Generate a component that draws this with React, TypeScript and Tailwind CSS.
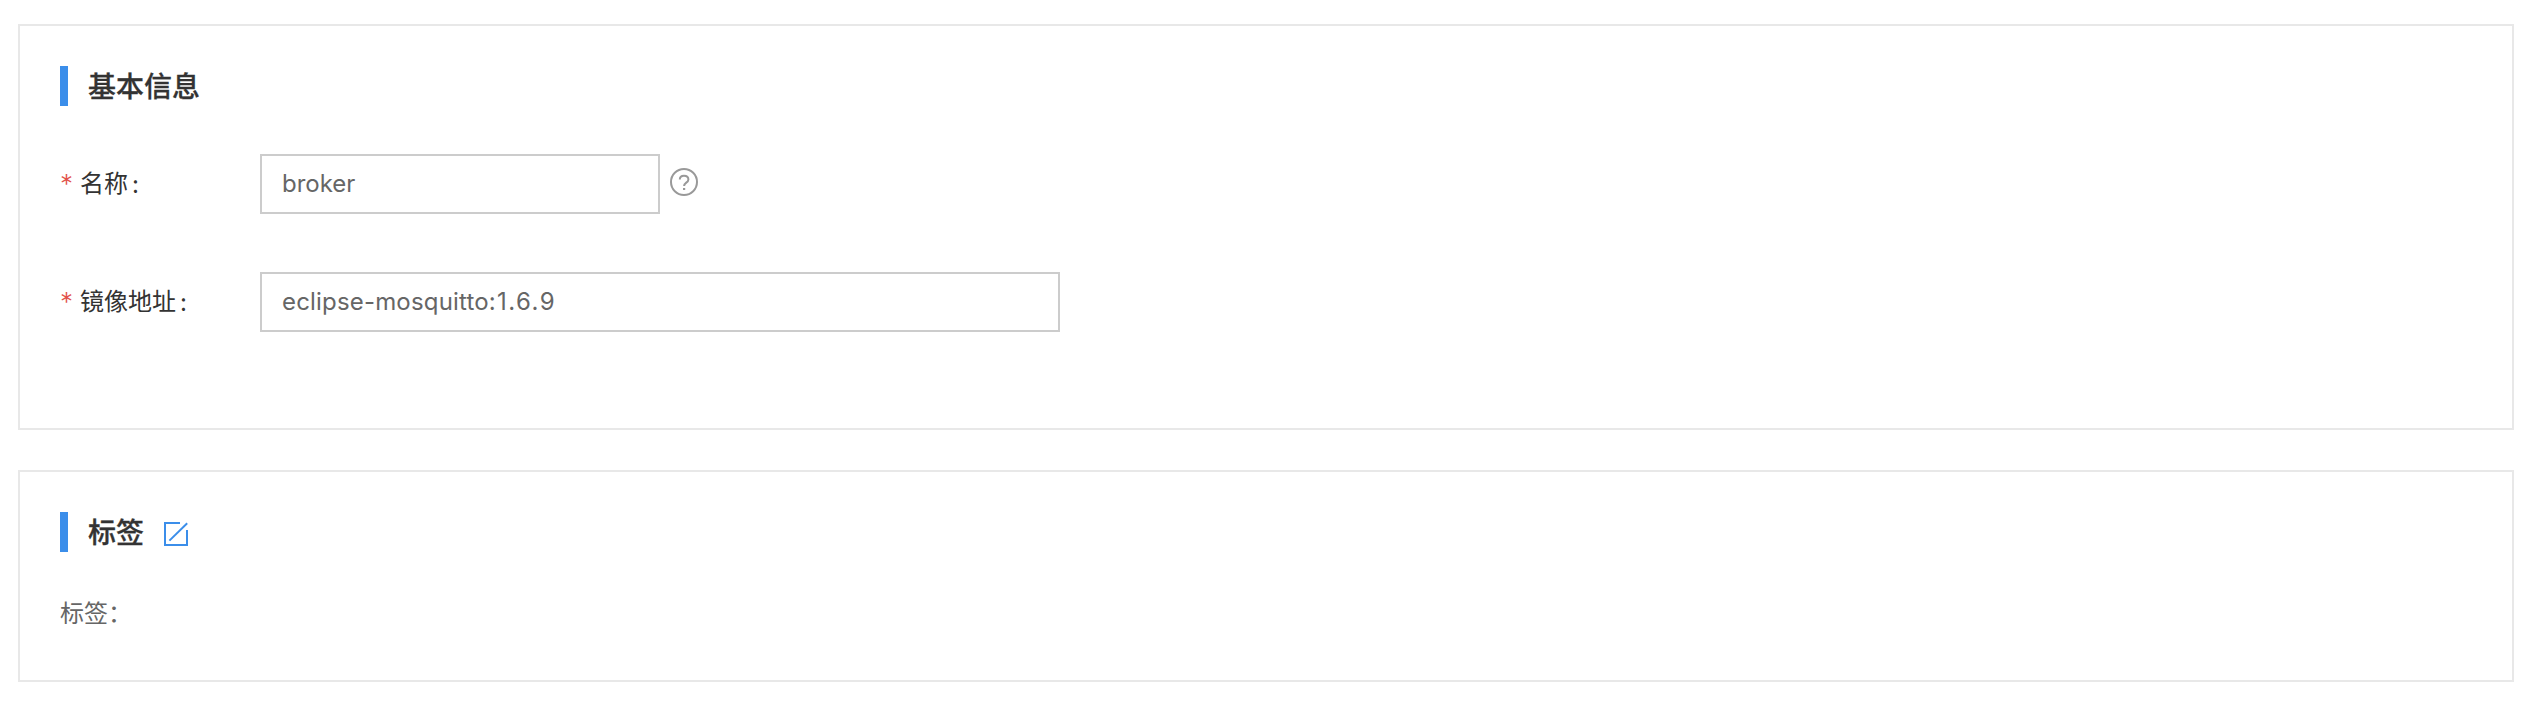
import type { ReactNode } from "react";

function Panel({ className, children }: { className: string; children: ReactNode }) {
  return (
    <section className={`w-[2496px] border-2 border-[#e8e8e8] bg-white pl-10 pt-10 ${className}`}>
      {children}
    </section>
  );
}

function PanelTitle({ text, children }: { text: string; children?: ReactNode }) {
  return (
    <div className="flex h-10 items-center">
      <span className="h-10 w-2 bg-[#3b8eea]" />
      <h2 className="ml-5 pt-0.5 text-[28px] leading-10 font-medium text-[#333] [-webkit-text-stroke:0.3px_#333]">{text}</h2>
      {children}
    </div>
  );
}

function Field({ label, width, value, children }: { label: string; width: string; value: ReactNode; children?: ReactNode }) {
  return (
    <div className="flex h-[60px] items-center">
      <div className="flex w-[200px] items-center text-2xl leading-9 text-[#333]">
        <span className="w-5 font-['Inter',sans-serif] text-[26px] font-light text-[#e2504a]">*</span>
        <span>{label}</span>
        <span className="ml-1 pt-0.5 font-['Inter',sans-serif]">:</span>
      </div>
      <div
        role="textbox"
        className={`flex h-[60px] items-center border-2 border-[#ccc] bg-white px-5 text-2xl text-[#666] ${width}`}
      >
        {value}
      </div>
      {children}
    </div>
  );
}

function HelpIcon() {
  return (
    <svg className="mb-1 ml-2.5 h-7 w-7" viewBox="0 0 28 28" fill="none" stroke="#999" strokeWidth="2">
      <circle cx="14" cy="14" r="13" />
      <path d="M9.8 11.5C9.8 9 11.6 7.7 14 7.7s4.4 1.4 4.4 3.7c0 3.2-4.3 3.3-4.3 6.6" />
      <path d="M13 21h2.2" />
    </svg>
  );
}

function EditIcon() {
  return (
    <svg className="mt-1 ml-5 h-6 w-6" viewBox="0 0 24 24" fill="none" stroke="#3b8eea" strokeWidth="2">
      <path d="M16 1H1v22h22V8" />
      <path d="M5.4 18.6 23.2 1.2" />
    </svg>
  );
}

export default function App() {
  return (
    <main className="flex h-[720px] w-[2544px] flex-col gap-10 bg-white pl-[18px] pt-6 font-['Inter','Noto_Sans_CJK_SC',sans-serif]">
      <Panel className="h-[406px]">
        <PanelTitle text="基本信息" />
        <div className="mt-12 flex flex-col gap-[58px]">
          <Field label="名称" width="w-[400px]" value="broker">
            <HelpIcon />
          </Field>
          <Field
            label="镜像地址"
            width="w-[800px]"
            value={
              <>
                <span className="tracking-[0.18px]">eclipse-mosquitto:</span>
                <span className="ml-px tracking-[1.5px]">1.6.9</span>
              </>
            }
          />
        </div>
      </Panel>
      <Panel className="h-[212px]">
        <PanelTitle text="标签">
          <EditIcon />
        </PanelTitle>
        <p className="mt-11 text-2xl leading-9 text-[#666]">标签：</p>
      </Panel>
    </main>
  );
}
